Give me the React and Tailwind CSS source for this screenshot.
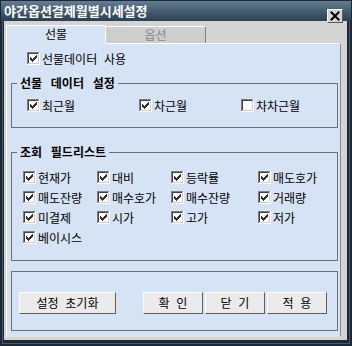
import clsx from "clsx";

// classic 7x7 check mark, [x, y, width]
const CHECK = [
  [9, 3, 1],
  [8, 4, 2],
  [3, 5, 1],
  [7, 5, 3],
  [3, 6, 2],
  [6, 6, 3],
  [3, 7, 5],
  [4, 8, 3],
  [5, 9, 1],
];

function Box({ checked = true }) {
  return (
    <svg width="13" height="13" viewBox="0 0 13 13" shapeRendering="crispEdges" className="shrink-0">
      <rect x="0" y="0" width="13" height="13" fill="#ffffff" />
      <rect x="0" y="0" width="12" height="1" fill="#808080" />
      <rect x="0" y="0" width="1" height="12" fill="#808080" />
      <rect x="1" y="1" width="10" height="1" fill="#404040" />
      <rect x="1" y="1" width="1" height="10" fill="#404040" />
      <rect x="1" y="11" width="11" height="1" fill="#d4d0c8" />
      <rect x="11" y="1" width="1" height="11" fill="#d4d0c8" />
      {checked &&
        CHECK.map(([x, y, w]) => (
          <rect key={`${x}-${y}`} x={x} y={y} width={w} height="1" fill="#333333" />
        ))}
    </svg>
  );
}

function Check({ label, checked = true, className }) {
  return (
    <label className={clsx("flex h-[13px] items-center gap-[2px] text-[12px] leading-[13px] text-black", className)}>
      <Box checked={checked} />
      <span className="whitespace-nowrap">{label}</span>
    </label>
  );
}

function Btn({ children, className }) {
  return (
    <button
      className={clsx(
        "h-[22px] border border-t-white border-l-white border-r-[#5e5e5e] border-b-[#5e5e5e] bg-[#ebebeb] text-[12px] leading-none text-black [word-spacing:4px]",
        className
      )}
    >
      {children}
    </button>
  );
}

const fields = [
  "현재가", "대비", "등락률", "매도호가",
  "매도잔량", "매수호가", "매수잔량", "거래량",
  "미결제", "시가", "고가", "저가",
  "베이시스",
];

export default function App() {
  return (
    <div className="flex h-[346px] w-[352px] flex-col bg-[#1c2836] p-px font-['Noto_Sans_CJK_KR',sans-serif] shadow-[inset_0_0_0_2px_#1c2836,inset_0_0_0_3px_#46596c]">
      {/* title bar */}
      <div className="flex h-[20px] items-start justify-between bg-linear-to-b from-[#637d93] to-[#2c4052] pl-[3px] pr-[8px]">
        <span className="mt-[2px] text-[13px] font-bold leading-[16px] text-white">야간옵션결제월별시세설정</span>
        <button className="relative z-10 mt-[8px] h-[14px] w-[16px] border border-t-white border-l-white border-r-[#5a5a5a] border-b-[#5a5a5a] bg-[#d4d4d4]">
          <svg width="14" height="12" viewBox="0 0 14 12" className="block">
            <path d="M3.5 2.5 L10.5 9.5 M10.5 2.5 L3.5 9.5" stroke="#000" strokeWidth="2" strokeLinecap="square" />
          </svg>
        </button>
      </div>

      {/* body */}
      <div className="mb-[5px] ml-[3px] mr-[4px] flex flex-1 flex-col bg-[#d4d4d4] pb-[3px] pl-[2px] pr-[6px] pt-[4px]">
        {/* tabs */}
        <div className="flex h-[18px] items-end">
          <div className="relative z-10 -mb-px flex h-[19px] w-[99px] items-center justify-center border-l border-t border-white bg-[#d6e3f4] pb-[2px] text-[12px] text-black">
            선물
          </div>
          <div className="flex h-[17px] w-[101px] items-center justify-center border-l border-r border-t border-white border-r-[#808080] bg-[#cecece] pb-px text-[12px] text-[#8a8a8a]">
            옵션
          </div>
        </div>

        {/* panel */}
        <div className="flex flex-1 flex-col border border-white border-b-[#e4e4e4] border-r-[#8a8a8a] bg-[#d6e3f4] pl-[4px] pr-[2px]">
          <Check className="ml-[16px] mt-[8px] [word-spacing:4px]" label="선물데이터 사용" />

          <fieldset className="mt-[10px] border border-[#6f6f6f]">
            <legend className="ml-[5px] px-[3px] text-[12px] font-bold leading-[16px] text-black [word-spacing:6px]">
              선물 데이터 설정
            </legend>
            <div className="flex pb-[15px] pl-[15px] pt-[8px]">
              <Check className="w-[112px]" label="최근월" />
              <Check className="w-[102px]" label="차근월" />
              <Check label="차차근월" checked={false} />
            </div>
          </fieldset>

          <fieldset className="mt-[16px] border border-[#6f6f6f]">
            <legend className="ml-[5px] px-[3px] text-[12px] font-bold leading-[16px] text-black [word-spacing:6px]">
              조회 필드리스트
            </legend>
            <div className="grid grid-cols-[74px_74px_87px_1fr] gap-y-[7px] pb-[16px] pl-[11px] pt-[11px]">
              {fields.map((f) => (
                <Check key={f} label={f} />
              ))}
            </div>
          </fieldset>

          <div className="mt-[10px] flex border border-[#6f6f6f] pb-[16px] pl-[7px] pt-[20px]">
            <Btn className="w-[97px]">설정 초기화</Btn>
            <Btn className="ml-[27px] w-[60px]">확 인</Btn>
            <Btn className="ml-[2px] w-[60px]">닫 기</Btn>
            <Btn className="ml-[2px] w-[60px]">적 용</Btn>
          </div>
        </div>
      </div>
    </div>
  );
}
